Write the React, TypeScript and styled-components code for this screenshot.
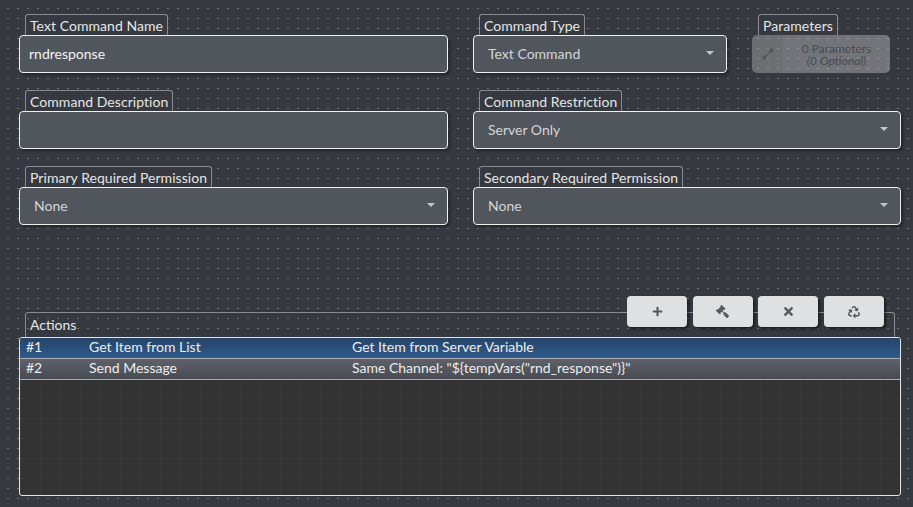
import { ReactNode } from 'react'
import { FaExpandAlt, FaGavel, FaPlus, FaRecycle, FaTimes } from 'react-icons/fa'
import styled, { createGlobalStyle } from 'styled-components'

const GlobalStyle = createGlobalStyle`
  html, body {
    margin: 0;
    padding: 0;
    height: 100%;
    overflow: hidden;
    background: #36393f;
  }
  * {
    box-sizing: border-box;
  }
`

const dotTile = encodeURIComponent(
  '<svg xmlns="http://www.w3.org/2000/svg" width="10" height="10"><rect x="7" y="8" width="2" height="1" fill="#6e7176"/></svg>',
)

const Page = styled.div`
  width: 913px;
  height: 507px;
  padding: 14px 12px 0 19px;
  font-family: Lato, 'Open Sans', sans-serif;
  color: #dcddde;
  background-color: #36393f;
  background-image: url("data:image/svg+xml,${dotTile}");
  background-size: 10px 10px;
`

const FormGrid = styled.div`
  display: grid;
  grid-template-columns: 429px 428px;
  column-gap: 25px;
  row-gap: 17px;
`

const TopRow = styled.div`
  display: flex;
  justify-content: space-between;
  padding-right: 11px;
`

const FieldBox = styled.div<{ $width?: number }>`
  display: flex;
  flex-direction: column;
  align-items: flex-start;
  width: ${p => (p.$width ? `${p.$width}px` : '100%')};
`

const Tab = styled.div`
  margin-left: 6px;
  height: 21px;
  padding: 0 4px;
  font-size: 14px;
  line-height: 22px;
  letter-spacing: 0.05px;
  color: #e4e6e8;
  border: 1px solid #888b90;
  border-bottom: none;
  border-radius: 3px 3px 0 0;
  background: #36393f;
  white-space: nowrap;
`

const Control = styled.div`
  width: 100%;
  height: 38px;
  padding: 0 9px 2px;
  display: flex;
  align-items: center;
  justify-content: space-between;
  font-size: 14px;
  color: #f2f3f4;
  background: #51555c;
  border: 1px solid #f0f0f0;
  border-radius: 4px;
  box-shadow: 2px 2px 3px rgba(0, 0, 0, 0.35);
`

const SelectBox = styled(Control)`
  padding: 0 14px 2px;
  color: #d3d5d8;
`

const Caret = styled.span`
  width: 0;
  height: 0;
  margin-top: -1px;
  margin-right: -2px;
  border-left: 4px solid transparent;
  border-right: 4px solid transparent;
  border-top: 4px solid #c4c5c8;
`

const ParamButton = styled.div`
  display: flex;
  width: 138px;
  height: 38px;
  border-radius: 5px;
  background: rgba(255, 255, 255, 0.3);
`

const ParamIcon = styled.div`
  width: 31px;
  display: flex;
  align-items: center;
  justify-content: center;
  color: #505358;
  background: rgba(0, 0, 0, 0.05);
  border-radius: 5px 0 0 5px;
`

const ParamText = styled.div`
  flex: 1;
  padding-top: 1px;
  font-size: 12px;
  line-height: 12px;
  text-align: center;
  color: #474a4f;
  display: flex;
  flex-direction: column;
  justify-content: center;
`

const ActionsSection = styled.section`
  position: relative;
  margin-top: 87px;
`

const ActionsTab = styled.div`
  margin-left: 6px;
  margin-right: 6px;
  height: 25px;
  padding: 3px 4px 0;
  font-size: 14px;
  line-height: 18px;
  color: #e4e6e8;
  border: 1px solid #888b90;
  border-bottom: none;
  border-radius: 3px 3px 0 0;
`

const ToolButtons = styled.div`
  position: absolute;
  top: -16px;
  right: 17px;
  display: flex;
  gap: 5.67px;
`

const ToolButton = styled.button`
  width: 60px;
  height: 31px;
  padding: 0;
  display: flex;
  align-items: center;
  justify-content: center;
  color: #55585d;
  background: #dfe0e2;
  border: none;
  border-radius: 4px;
  box-shadow: 2px 2px 3px rgba(0, 0, 0, 0.5);
`

const FlippedGavel = styled(FaGavel)`
  transform: scaleX(-1);
`

const ActionTable = styled.div`
  height: 159px;
  overflow: hidden;
  border: 1px solid #e4e4e4;
  border-radius: 3px;
  background-color: #333333;
  background-image:
    linear-gradient(to right, rgba(255, 255, 255, 0.03) 1px, transparent 1px),
    linear-gradient(to bottom, rgba(255, 255, 255, 0.03) 1px, transparent 1px);
  background-size: 20px 20px;
`

const ActionRow = styled.div<{ $selected?: boolean }>`
  display: grid;
  grid-template-columns: 63px 263px 1fr;
  height: 21px;
  padding-left: 6px;
  font-size: 14px;
  line-height: 17px;
  color: #eceded;
  border-bottom: 1px solid #a9abae;
  background: ${p =>
    p.$selected
      ? 'linear-gradient(to bottom, #264468, #2f5a8c)'
      : 'linear-gradient(to bottom, #5e6169, #484b52)'};
`

function Field({ label, width, children }: { label: string; width?: number; children: ReactNode }) {
  return (
    <FieldBox $width={width}>
      <Tab>{label}</Tab>
      {children}
    </FieldBox>
  )
}

function Select({ value }: { value: string }) {
  return (
    <SelectBox>
      <span>{value}</span>
      <Caret />
    </SelectBox>
  )
}

export default function App() {
  return (
    <Page>
      <GlobalStyle />
      <FormGrid>
        <Field label="Text Command Name">
          <Control>rndresponse</Control>
        </Field>
        <TopRow>
          <Field label="Command Type" width={254}>
            <Select value="Text Command" />
          </Field>
          <Field label="Parameters" width={138}>
            <ParamButton>
              <ParamIcon>
                <FaExpandAlt size={12} />
              </ParamIcon>
              <ParamText>
                <span>0 Parameters</span>
                <em>(0 Optional)</em>
              </ParamText>
            </ParamButton>
          </Field>
        </TopRow>
        <Field label="Command Description">
          <Control />
        </Field>
        <Field label="Command Restriction">
          <Select value="Server Only" />
        </Field>
        <Field label="Primary Required Permission">
          <Select value="None" />
        </Field>
        <Field label="Secondary Required Permission">
          <Select value="None" />
        </Field>
      </FormGrid>
      <ActionsSection>
        <ActionsTab>Actions</ActionsTab>
        <ToolButtons>
          <ToolButton aria-label="Add">
            <FaPlus size={11} />
          </ToolButton>
          <ToolButton aria-label="Edit">
            <FlippedGavel size={13} />
          </ToolButton>
          <ToolButton aria-label="Remove">
            <FaTimes size={13} />
          </ToolButton>
          <ToolButton aria-label="Recycle">
            <FaRecycle size={12} />
          </ToolButton>
        </ToolButtons>
        <ActionTable>
          <ActionRow $selected>
            <span>#1</span>
            <span>Get Item from List</span>
            <span>Get Item from Server Variable</span>
          </ActionRow>
          <ActionRow>
            <span>#2</span>
            <span>Send Message</span>
            <span>Same Channel: "{'${tempVars("rnd_response")}'}"</span>
          </ActionRow>
        </ActionTable>
      </ActionsSection>
    </Page>
  )
}
